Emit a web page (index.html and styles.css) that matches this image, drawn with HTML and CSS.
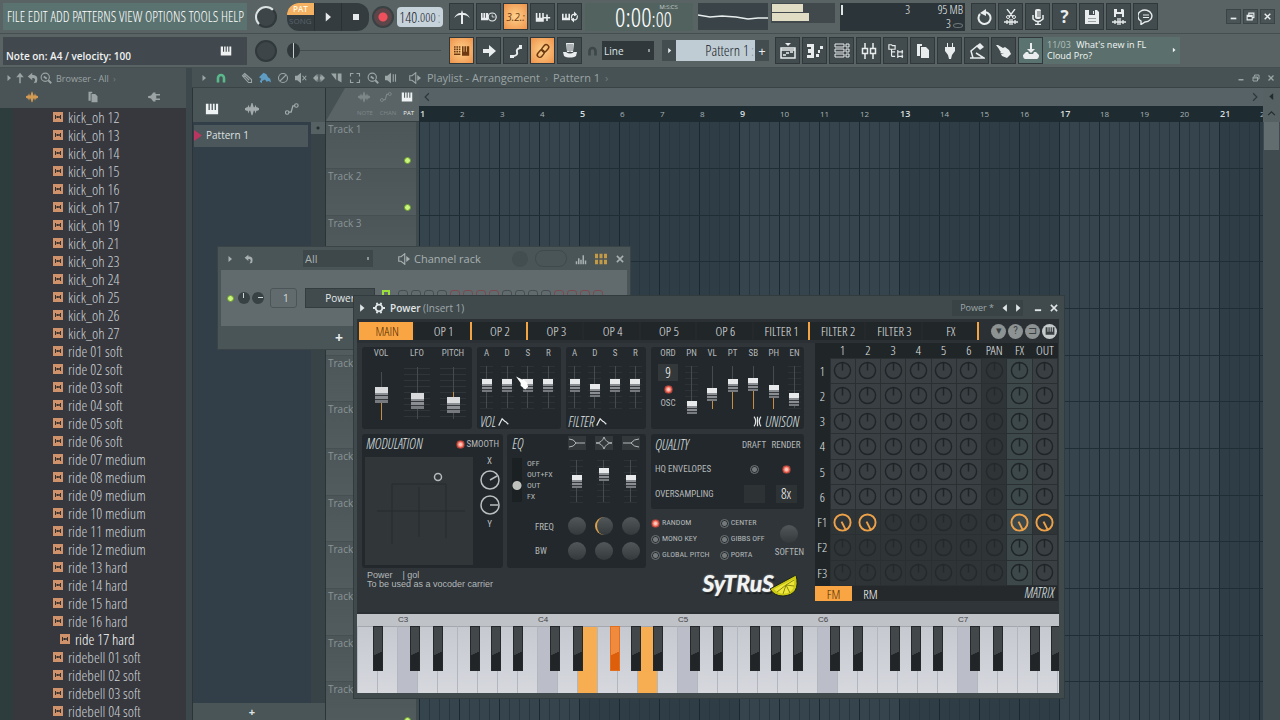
FILE: index.html
```html
<!DOCTYPE html>
<html lang="en">
<head>
    <meta charset="UTF-8">
    <meta name="viewport" content="width=device-width, initial-scale=1.0">
    <title>Power (Insert 1) - Studio</title>
    <link rel="stylesheet" href="styles.css">
</head>
<body>
    <!-- Icon set -->
    <svg class="sprite" aria-hidden="true">
        <symbol id="piano" viewBox="0 0 16 16"><path d="M1 2h3v7h1.500V2h2v7H9V2h2v7h1.500V2H15v12H1z" fill="currentColor"/></symbol>
        <symbol id="metronome" viewBox="0 0 16 16"><path d="M0 9q3-5 6-5l1 0 1-3 1 3 1 0q3 0 6 5-3-3-6-3l-1 0 0 9H7V6L6 6Q3 6 0 9z" fill="currentColor"/></symbol>
        <symbol id="pianoclock" viewBox="0 0 20 16"><path d="M0 3h2v6h1V3h2v6h1V3h3v9H0z" fill="currentColor"/><circle cx="14" cy="8" r="5" fill="none" stroke="currentColor" stroke-width="1.500"/><path d="M14 5v3h3" fill="none" stroke="currentColor"/></symbol>
        <symbol id="pianoplus" viewBox="0 0 20 16"><path d="M1 3h2v6h2V3h2v6h2V3h2v11H1z M14 5h2v3h3v2h-3v3h-2v-3h-3V8h3z" fill="currentColor"/></symbol>
        <symbol id="pianoloop" viewBox="0 0 20 16"><path d="M0 4h2v5h2V4h2v5h2V4h2v8H0z" fill="currentColor"/><path d="M12 10c-1-6 3-6 5-4M19 6c1 6-4 7-6 4" fill="none" stroke="currentColor" stroke-width="1.500"/><path d="M15 1l4 4-4 2zM15 15l-4-4 4-2z" fill="currentColor"/></symbol>
        <symbol id="keysgrid" viewBox="0 0 20 16"><path d="M0 2h2v2H0zM3 2h2v2H3zM6 2h2v2H6zM0 5h2v2H0zM3 5h2v2H3zM6 5h2v2H6zM0 8h2v2H0zM3 8h2v2H3zM6 8h2v2H6zM0 11h8v2H0zM10 2h2v7h1V2h2v7h1V2h3v12h-9z" fill="currentColor"/></symbol>
        <symbol id="arrow" viewBox="0 0 16 16"><path d="M2 6h6V2l7 6-7 6v-4H2z" fill="currentColor"/></symbol>
        <symbol id="slide" viewBox="0 0 16 16"><path d="M2 12h4v3H2zM11 2h3v4h-3z" fill="currentColor"/><path d="M6 13q4-1 3-4t3-4" fill="none" stroke="currentColor" stroke-width="2"/></symbol>
        <symbol id="link" viewBox="0 0 16 16"><g fill="none" stroke="currentColor" stroke-width="1.500" transform="rotate(-50 8 8)"><rect x="0.500" y="5.500" width="8" height="5" rx="2.500"/><rect x="7.500" y="5.500" width="8" height="5" rx="2.500"/></g></symbol>
        <symbol id="hat" viewBox="0 0 16 16"><path d="M4 0h8l-1 9H5zM1 9l3 0q4 3 8 0l3 0-1 4c-3 2-9 2-12 0z" fill="currentColor"/><path d="M6 1v7M8 1v8M10 1v7" stroke="#3b4448" stroke-width=".7"/></symbol>
        <symbol id="magnet" viewBox="0 0 16 16"><path d="M4 14V8a4 4 0 0 1 8 0v6" fill="none" stroke="currentColor" stroke-width="3.500"/></symbol>
        <symbol id="playlist" viewBox="0 0 16 16"><path d="M1 5h14v10H1zM1 7h14M3 12h3M6 10h3M10 9h3" fill="none" stroke="currentColor" stroke-width="1.500"/><path d="M5 0h6L8 3z" fill="currentColor"/></symbol>
        <symbol id="roll" viewBox="0 0 16 16"><path d="M0 1h7v14H0v-3h4v-2H1V6h3V4H0zM9 11h3v3H9zM11 7h2v3h-2zM13 3h3v3h-3z" fill="currentColor"/></symbol>
        <symbol id="rack" viewBox="0 0 16 16"><path d="M1 1h9v3H1zM1 6h9v3H1zM1 11h9v3H1z" fill="none" stroke="currentColor"/><path d="M12 1h3v3h-3zM12 6h3v3h-3zM12 11h3v3h-3z" fill="none" stroke="currentColor"/></symbol>
        <symbol id="mixer" viewBox="0 0 16 16"><path d="M1.500 5.500h5v5h-5zM9.500 5.500h5v5h-5zM4 0v5M4 11v5M12 0v5M12 11v5" fill="none" stroke="currentColor" stroke-width="1.500"/></symbol>
        <symbol id="tree" viewBox="0 0 18 16"><path d="M1 1h3l1 1h3v4H1zM4 6v8M4 9h4M4 14h4M11 7v5M11 12v4M11 9h6M11 14h6M16 7v4M16 12v4" fill="none" stroke="currentColor" stroke-width="1.300"/></symbol>
        <symbol id="files" viewBox="0 0 16 16"><path d="M2 1h5v2H5v10H2zM6 4h5l3 3v8H6z" fill="currentColor"/></symbol>
        <symbol id="plug" viewBox="0 0 16 16"><path d="M5 0h1v4h4V0h1v4h2v4l-3 4-1 4H7l-1-4-3-4V4h2z" fill="currentColor"/></symbol>
        <symbol id="lamp" viewBox="0 0 16 16"><path d="M1 15h14L7 10M4 15L2 8l6-5" fill="none" stroke="currentColor" stroke-width="1.500"/><path d="M7 3l4-3 4 4-4 3z" fill="currentColor"/></symbol>
        <symbol id="hand" viewBox="0 0 16 16"><path d="M0 2l2 0 5 3 2-1 4 3 2 4-4 4-5-2-1-2 3 0-4-1 1-1-1-1-1-2z" fill="currentColor"/></symbol>
        <symbol id="download" viewBox="0 0 16 16"><path d="M7 0h2v6h3l-4 4-4-4h3zM3 9h2l1 2h4l1-2h2l3 3c0 4-2 4-3 4H3c-1 0-3 0-3-4z" fill="currentColor"/></symbol>
        <symbol id="undo" viewBox="0 0 16 16"><path d="M9 3a6 6 0 1 1-5 2" fill="none" stroke="currentColor" stroke-width="2"/><path d="M4 4l6-4v7z" fill="currentColor"/></symbol>
        <symbol id="cut" viewBox="0 0 16 16"><path d="M4 0l6 8M12 0L6 8M1 13h14M4 11v4M7 10v6M9 10v6M12 11v4" fill="none" stroke="currentColor" stroke-width="1.300"/><circle cx="5" cy="8" r="1.500" fill="none" stroke="currentColor"/><circle cx="11" cy="8" r="1.500" fill="none" stroke="currentColor"/></symbol>
        <symbol id="mic" viewBox="0 0 16 16"><rect x="5" y="0" width="6" height="10" rx="2" fill="currentColor"/><path d="M3 6v4q5 5 10 0V6M8 12v3M5 15.500h6" fill="none" stroke="currentColor" stroke-width="1.500"/><path d="M7 3h4M7 5h4M7 7h4" stroke="#3b4448" stroke-width=".8"/></symbol>
        <symbol id="save" viewBox="0 0 16 16"><path d="M1 1h12l2 2v12H1z" fill="currentColor"/><path d="M5 1h6v5H5z" fill="#465054"/><path d="M4 9h8v1H4zM4 12h8v1H4z" fill="#9aa2a4"/><path d="M9 2h1v3H9z" fill="currentColor"/></symbol>
        <symbol id="savewave" viewBox="0 0 16 16"><path d="M3 0h9l1 1v7H3z" fill="currentColor"/><path d="M6 0h4v3H6zM5 5h6v3H5z" fill="#465054"/><path d="M1 13h14M4 11v4M7 9v7M9 9v7M12 11v4" stroke="currentColor" stroke-width="1.300"/></symbol>
        <symbol id="chat" viewBox="0 0 16 16"><path d="M3 12a7 6 0 1 1 4 1l-4 2.500z" fill="none" stroke="currentColor" stroke-width="1.400"/><path d="M5 6h6M5 8.500h6" stroke="currentColor"/></symbol>
        <symbol id="wave" viewBox="0 0 16 16"><path d="M0 7l2-1 1 0 1-3 1 3 1 0 1.500-5h1L10 6h1l1-3 1 3h1l2 1v2l-2 1-1 0-1 3-1-3-1 0-1.500 5h-1L6 10H5l-1 3-1-3H2L0 9z" fill="currentColor"/></symbol>
        <symbol id="auto" viewBox="0 0 16 16"><path d="M4 11.500h3l2-7h2" fill="none" stroke="currentColor" stroke-width="1.500"/><circle cx="2.500" cy="12" r="2" fill="none" stroke="currentColor" stroke-width="1.300"/><circle cx="13" cy="4" r="2" fill="none" stroke="currentColor" stroke-width="1.300"/></symbol>
        <symbol id="tri" viewBox="0 0 16 16"><path d="M5 2l7 6-7 6z" fill="currentColor"/></symbol>
        <symbol id="chevron" viewBox="0 0 16 16"><path d="M5 2l6 6-6 6" fill="none" stroke="currentColor" stroke-width="2"/></symbol>
        <symbol id="up" viewBox="0 0 16 16"><path d="M8 1l5 6H9v8H7V7H3z" fill="currentColor"/></symbol>
        <symbol id="back" viewBox="0 0 16 16"><path d="M1 6l6-5v3c6 0 8 3 6 10l-4 1c3-5 2-7-2-7v3z" fill="currentColor"/></symbol>
        <symbol id="find" viewBox="0 0 16 16"><circle cx="7" cy="7" r="5.500" fill="none" stroke="currentColor" stroke-width="1.500"/><path d="M11 11l4 4M5 6l4 3" stroke="currentColor" stroke-width="2.500"/></symbol>
        <symbol id="speaker" viewBox="0 0 16 16"><path d="M1 5h3l5-4v14l-5-4H1z" fill="none" stroke="currentColor" stroke-width="1.500"/><path d="M11 4l5 4-5 4z" fill="currentColor"/></symbol>
        <symbol id="mute" viewBox="0 0 16 16"><path d="M0 5h3l5-4v14l-5-4H0z" fill="currentColor"/><path d="M10 5l5 6M15 5l-5 6" stroke="currentColor" stroke-width="1.500"/></symbol>
        <symbol id="preview" viewBox="0 0 16 16"><path d="M0 5h3l5-4v14l-5-4H0z" fill="currentColor"/><path d="M11 3v10M14 3v10" stroke="currentColor" stroke-width="1.500"/></symbol>
        <symbol id="pencil" viewBox="0 0 16 16"><path d="M2 5l3-3 9 8 0 4-4 0zM5 5l6 6M3 7l3-3" fill="none" stroke="currentColor" stroke-width="1.500"/></symbol>
        <symbol id="brush" viewBox="0 0 16 16"><path d="M0 7l6-6 4 2 2 4 3 2 1 5-3-2-3 1-2-3-4 2 0 3-3-2 2-4z" fill="currentColor"/></symbol>
        <symbol id="ban" viewBox="0 0 16 16"><circle cx="8" cy="8" r="6" fill="none" stroke="currentColor" stroke-width="1.500"/><path d="M4 12l8-8" stroke="currentColor" stroke-width="1.500"/></symbol>
        <symbol id="stretch" viewBox="0 0 16 16"><path d="M0 8l5-5v3h1V3h1v10H6v-3H5v3zM16 8l-5-5v3h-1V3H9v10h1v-3h1v3z" fill="currentColor"/></symbol>
        <symbol id="slice" viewBox="0 0 16 16"><path d="M0 2h7v9zM9 2h5v12l-5-3z" fill="currentColor"/></symbol>
        <symbol id="select" viewBox="0 0 16 16"><path d="M6 2H2v4M10 2h4v4M14 10v4h-4M6 14H2v-4" fill="none" stroke="currentColor" stroke-width="1.500"/></symbol>
        <symbol id="plugside" viewBox="0 0 16 16"><path d="M0 7l4-1 3-4h3v2h6v2h-5v4h5v2h-6v2H7L4 10 0 9z" fill="currentColor"/></symbol>
        <symbol id="min" viewBox="0 0 16 16"><path d="M3 10h10v3H3z" fill="currentColor"/></symbol>
        <symbol id="restore" viewBox="0 0 16 16"><path d="M2 6h9v8H2zM5 5V2h9v8h-3M2 8h9" fill="none" stroke="currentColor" stroke-width="2"/></symbol>
        <symbol id="close" viewBox="0 0 16 16"><path d="M3 3l10 10M13 3L3 13" stroke="currentColor" stroke-width="2.500"/></symbol>
        <symbol id="gear" viewBox="0 0 16 16"><circle cx="8" cy="8" r="4.500" fill="none" stroke="currentColor" stroke-width="2.500"/><path d="M5 1l1 3M11 1l-1 3M5 15l1-3M11 15l-1-3M0 8h3M13 8h3" stroke="currentColor" stroke-width="2.500"/></symbol>
        <symbol id="sample" viewBox="0 0 10 10"><path d="M0 0h10v10H0z" fill="#d0926b"/><path d="M2.500 3v4M7.500 3v4M2 5h6M4.500 4v2M6 4v2" stroke="#33302f"/></symbol>
        <symbol id="bars" viewBox="0 0 16 16"><path d="M1 11h2v4H1zM4 7h2v8H4zM7 9h2v6H7zM10 3h2v12h-2zM13 10h2v5h-2z" fill="currentColor"/></symbol>
        <symbol id="steps" viewBox="0 0 16 16"><path d="M0 1h4v6H0zM6 1h4v6H6zM12 1h4v6h-4zM0 9h4v6H0zM6 9h4v6H6zM12 9h4v6h-4z" fill="currentColor"/></symbol>
        <symbol id="ring" viewBox="0 0 20 20"><circle cx="10" cy="10" r="8.500" fill="none" stroke="currentColor" stroke-width="1.500"/><path d="M10 2v8" stroke="currentColor" stroke-width="1.500"/></symbol>
        <symbol id="ring-on" viewBox="0 0 20 20"><circle cx="10" cy="10" r="8.500" fill="none" stroke="currentColor" stroke-width="2"/><path d="M9 9l4 8" stroke="currentColor" stroke-width="2"/></symbol>
        <symbol id="env" viewBox="0 0 16 16"><path d="M1 14L6 4l4 4h1l4 4" fill="none" stroke="currentColor" stroke-width="1.800"/></symbol>
        <symbol id="detune" viewBox="0 0 16 16"><path d="M3 1q5 7 0 14M8 1v14M13 1q-5 7 0 14" fill="none" stroke="currentColor" stroke-width="1.800"/></symbol>
        <symbol id="lowshelf" viewBox="0 0 16 12"><path d="M0 2q5 0 7 4 2 0 9 0M0 10q5 0 7-4" fill="none" stroke="currentColor"/></symbol>
        <symbol id="bell" viewBox="0 0 16 12"><path d="M0 6q6 0 8-6 2 6 8 6-6 0-8 6-2-6-8-6" fill="none" stroke="currentColor"/></symbol>
        <symbol id="highshelf" viewBox="0 0 16 12"><path d="M0 6h8q3-4 8-4M8 6q3 4 8 4" fill="none" stroke="currentColor"/></symbol>
    </svg>

    <div class="studio">
        <header class="toolbar">
            <div class="bar">
                <nav class="menu">
                    <a href="#">FILE</a><a href="#">EDIT</a><a href="#">ADD</a><a href="#">PATTERNS</a><a href="#">VIEW</a><a href="#">OPTIONS</a><a href="#">TOOLS</a><a href="#">HELP</a>
                </nav>
                <div class="dial-box"><span class="dial lit"></span></div>
                <div class="transport">
                    <button class="mode"><b>PAT</b><i>SONG</i></button>
                    <button aria-label="Play"><svg><use href="#tri"/></svg></button>
                    <button aria-label="Stop"><span class="stop"></span></button>
                </div>
                <button class="record" aria-label="Record"></button>
                <div class="tempo">140<small>.000</small><em>:</em></div>
                <div class="tools">
                    <button aria-label="Metronome"><svg><use href="#metronome"/></svg></button>
                    <button aria-label="Wait"><svg><use href="#pianoclock"/></svg></button>
                    <button class="on count">3.2.:</button>
                    <button aria-label="Overdub"><svg><use href="#pianoplus"/></svg></button>
                    <button aria-label="Loop record"><svg><use href="#pianoloop"/></svg></button>
                </div>
                <div class="clock"><span>0:00</span><div><em>M:S:CS</em><small>:00</small></div></div>
                <svg class="scope" viewBox="0 0 70 27"><path d="M0 12l12 2 12-1 14 1 12 2 10-1 10 0" fill="none" stroke="#e8eeee" stroke-width="1.500"/></svg>
                <div class="meters"><i></i><i></i></div>
                <div class="cpu">
                    <div><span>3</span><span>95 MB</span></div>
                    <div><span></span><span>3 <i></i></span></div>
                </div>
                <div class="tools">
                    <button aria-label="Undo"><svg><use href="#undo"/></svg></button>
                    <button aria-label="Cut"><svg><use href="#cut"/></svg></button>
                    <button aria-label="Record audio"><svg><use href="#mic"/></svg></button>
                    <button class="help">?</button>
                    <button aria-label="Save"><svg><use href="#save"/></svg></button>
                    <button aria-label="Export"><svg><use href="#savewave"/></svg></button>
                    <button aria-label="Chat"><svg><use href="#chat"/></svg></button>
                </div>
                <div class="window-buttons">
                    <button aria-label="Minimize"><svg><use href="#min"/></svg></button>
                    <button aria-label="Restore"><svg><use href="#restore"/></svg></button>
                    <button aria-label="Close"><svg><use href="#close"/></svg></button>
                </div>
            </div>
            <div class="bar">
                <div class="hint"><span>Note on: A4 / velocity: 100</span><svg><use href="#piano"/></svg></div>
                <div class="dial-box"><span class="dial"></span></div>
                <input class="position" type="range" value="0" aria-label="Song position">
                <div class="tools">
                    <button class="on" aria-label="Typing keyboard"><svg><use href="#keysgrid"/></svg></button>
                    <button aria-label="Step edit"><svg><use href="#arrow"/></svg></button>
                    <button aria-label="Slide"><svg><use href="#slide"/></svg></button>
                    <button class="on" aria-label="Link"><svg><use href="#link"/></svg></button>
                    <button aria-label="Multilink"><svg><use href="#hat"/></svg></button>
                </div>
                <svg class="snap-icon"><use href="#magnet"/></svg>
                <select class="snap" aria-label="Snap"><option>Line</option></select>
                <div class="pattern">
                    <button aria-label="Pattern menu"><svg><use href="#tri"/></svg></button>
                    <span>Pattern 1<em>:</em></span>
                    <button>+</button>
                </div>
                <div class="tools">
                    <button aria-label="Playlist"><svg><use href="#playlist"/></svg></button>
                    <button aria-label="Piano roll"><svg><use href="#roll"/></svg></button>
                    <button aria-label="Channel rack"><svg><use href="#rack"/></svg></button>
                    <button aria-label="Mixer"><svg><use href="#mixer"/></svg></button>
                    <button aria-label="Browser"><svg><use href="#tree"/></svg></button>
                    <button aria-label="Project"><svg><use href="#files"/></svg></button>
                    <button aria-label="Plugins"><svg><use href="#plug"/></svg></button>
                    <button aria-label="Tempo tapper"><svg><use href="#lamp"/></svg></button>
                    <button aria-label="Touch"><svg><use href="#hand"/></svg></button>
                    <button class="green" aria-label="Download"><svg><use href="#download"/></svg></button>
                </div>
                <a class="news" href="#"><span><i>11/03</i> What's new in FL<br>Cloud Pro?</span><svg><use href="#tri"/></svg></a>
            </div>
        </header>

        <main>
            <aside class="browser">
                <div class="browser-head">
                    <svg><use href="#tri"/></svg><svg><use href="#up"/></svg><svg><use href="#back"/></svg><svg><use href="#find"/></svg>
                    <span>Browser - All <i>›</i></span>
                </div>
                <div class="browser-tabs">
                    <button class="on" aria-label="Sounds"><svg><use href="#wave"/></svg></button>
                    <button aria-label="Files"><svg><use href="#files"/></svg></button>
                    <button aria-label="Plugins"><svg><use href="#plugside"/></svg></button>
                </div>
                <ul id="sounds"></ul>
            </aside>

            <section class="playlist">
                <div class="playlist-head">
                    <svg class="small"><use href="#tri"/></svg>
                    <svg class="magnet"><use href="#magnet"/></svg>
                    <svg><use href="#pencil"/></svg>
                    <svg class="blue"><use href="#brush"/></svg>
                    <svg><use href="#ban"/></svg>
                    <svg><use href="#mute"/></svg>
                    <svg><use href="#stretch"/></svg>
                    <svg><use href="#slice"/></svg>
                    <svg><use href="#select"/></svg>
                    <svg><use href="#find"/></svg>
                    <svg><use href="#preview"/></svg>
                    <svg class="out"><use href="#speaker"/></svg>
                    <span>Playlist - Arrangement <i>›</i> Pattern 1 <i>›</i></span>
                    <div class="mini-buttons">
                        <svg><use href="#min"/></svg><svg><use href="#restore"/></svg><svg><use href="#close"/></svg>
                    </div>
                </div>
                <div class="playlist-body">
                    <div class="picker">
                        <div class="picker-tabs">
                            <svg class="on"><use href="#piano"/></svg><svg><use href="#wave"/></svg><svg><use href="#auto"/></svg>
                        </div>
                        <div class="picker-list">
                            <div class="pattern-item">Pattern 1</div>
                            <div class="picker-scroll"><i></i></div>
                        </div>
                        <button class="picker-add">+</button>
                    </div>
                    <div class="tracks">
                        <div class="track-modes">
                            <div><svg><use href="#wave"/></svg><svg><use href="#auto"/></svg><svg class="on"><use href="#piano"/></svg></div>
                            <div><span>NOTE</span><span>CHAN</span><span class="on">PAT</span></div>
                        </div>
                        <div id="tracks"></div>
                    </div>
                    <div class="timeline">
                        <div class="hscroll"><svg class="flip"><use href="#chevron"/></svg><svg><use href="#chevron"/></svg></div>
                        <div class="ruler" id="ruler"></div>
                        <div class="lanes" id="lanes"></div>
                    </div>
                    <div class="vscroll"><b><svg class="flip"><use href="#tri"/></svg></b><b><svg class="turn"><use href="#chevron"/></svg></b><i></i></div>
                </div>
            </section>
        </main>

        <section class="rack">
            <div class="rack-head">
                <svg class="small"><use href="#tri"/></svg>
                <svg class="undo"><use href="#back"/></svg>
                <select aria-label="Channel filter"><option>All</option></select>
                <svg class="out"><use href="#speaker"/></svg>
                <span>Channel rack</span>
                <i class="swing"></i><i class="pill"></i>
                <svg><use href="#bars"/></svg>
                <svg class="steps-icon"><use href="#steps"/></svg>
                <svg><use href="#close"/></svg>
            </div>
            <div class="rack-body">
                <i class="led"></i><i class="pot"></i><i class="pot side"></i>
                <span class="route">1</span>
                <button class="channel">Power</button>
                <i class="select-led"></i>
                <div class="step-row" id="steps-row"></div>
            </div>
            <div class="rack-foot"><button>+</button></div>
        </section>

        <section class="sytrus">
            <div class="sytrus-title">
                <svg class="small"><use href="#tri"/></svg>
                <svg class="gear"><use href="#gear"/></svg>
                <h1>Power <span>(Insert 1)</span></h1>
                <div class="preset">Power * <button aria-label="Previous preset"><svg class="flip"><use href="#tri"/></svg></button><button aria-label="Next preset"><svg><use href="#tri"/></svg></button></div>
                <svg><use href="#min"/></svg><svg><use href="#close"/></svg>
            </div>
            <div class="tab-row">
                <nav class="tabs">
                    <button class="on">MAIN</button><button class="used">OP 1</button><button class="used">OP 2</button><button>OP 3</button><button>OP 4</button><button>OP 5</button><button>OP 6</button><button class="used">FILTER 1</button><button>FILTER 2</button><button>FILTER 3</button><button class="used">FX</button>
                </nav>
                <div class="round-buttons">
                    <button>▾</button><button>?</button><button>⊐</button><button class="on" aria-label="Keyboard"><svg><use href="#piano"/></svg></button>
                </div>
            </div>
            <div class="synth">
                <div class="left">
                    <div class="row">
                        <div class="panel vol">
                            <div class="faders big">
                                <label class="fader up">VOL<input type="range" value="46"></label>
                                <label class="fader">LFO<input type="range" value="33"></label>
                                <label class="fader down">PITCH<input type="range" value="25"></label>
                            </div>
                        </div>
                        <div class="panel adsr">
                            <div class="faders">
                                <label class="fader">A<input type="range" value="53"></label>
                                <label class="fader">D<input type="range" value="53"></label>
                                <label class="fader">S<input type="range" value="53"></label>
                                <label class="fader">R<input type="range" value="53"></label>
                            </div>
                            <h2>VOL <svg><use href="#env"/></svg></h2>
                            <svg class="cursor" viewBox="0 0 14 14"><path d="M0 0l6 3 2 0 4 4 1 4-3 3-5-4 0-3z" fill="#fff"/></svg>
                        </div>
                        <div class="panel adsr">
                            <div class="faders">
                                <label class="fader">A<input type="range" value="53"></label>
                                <label class="fader">D<input type="range" value="42"></label>
                                <label class="fader">S<input type="range" value="53"></label>
                                <label class="fader">R<input type="range" value="53"></label>
                            </div>
                            <h2>FILTER <svg><use href="#env"/></svg></h2>
                        </div>
                    </div>
                    <div class="row">
                        <div class="panel modulation">
                            <div class="panel-head">
                                <h2>MODULATION</h2>
                                <label class="check"><input type="checkbox" checked>SMOOTH</label>
                            </div>
                            <div class="mod-body">
                                <div class="pad">
                                    <svg viewBox="0 0 108 108"><path d="M27 87V27h54v54M12 54h88M54 30v50" fill="none" stroke="#262b2d"/><circle cx="73" cy="20" r="3.500" fill="none" stroke="#b6babb" stroke-width="1.500"/></svg>
                                </div>
                                <div class="xy">
                                    <span>X</span>
                                    <svg viewBox="0 0 20 20"><circle cx="10" cy="10" r="9" fill="none" stroke="currentColor" stroke-width="1.500"/><path d="M10 10l7-4" stroke="currentColor" stroke-width="1.500"/></svg>
                                    <svg viewBox="0 0 20 20"><circle cx="10" cy="10" r="9" fill="none" stroke="currentColor" stroke-width="1.500"/><path d="M10 10h8" stroke="currentColor" stroke-width="1.500"/></svg>
                                    <span>Y</span>
                                </div>
                            </div>
                        </div>
                        <div class="panel eq">
                            <div class="eq-left">
                                <h2>EQ</h2>
                                <div class="eq-switch">
                                    <label><input type="radio" name="eq">OFF</label>
                                    <label><input type="radio" name="eq">OUT+FX</label>
                                    <label><input type="radio" name="eq" checked>OUT</label>
                                    <label><input type="radio" name="eq">FX</label>
                                </div>
                                <div class="eq-names"><span>FREQ</span><span>BW</span></div>
                            </div>
                            <div class="eq-band">
                                <button aria-label="Low shelf"><svg><use href="#lowshelf"/></svg></button>
                                <input type="range" value="50" aria-label="Low level">
                                <i class="ball"></i><i class="ball"></i>
                            </div>
                            <div class="eq-band">
                                <button aria-label="Peak"><svg><use href="#bell"/></svg></button>
                                <input type="range" value="65" aria-label="Mid level">
                                <i class="ball arc"></i><i class="ball"></i>
                            </div>
                            <div class="eq-band">
                                <button aria-label="High shelf"><svg><use href="#highshelf"/></svg></button>
                                <input type="range" value="50" aria-label="High level">
                                <i class="ball"></i><i class="ball"></i>
                            </div>
                        </div>
                    </div>
                    <p class="notes">Power &nbsp; &nbsp;| gol<br>To be used as a vocoder carrier</p>
                </div>

                <div class="right">
                    <div class="panel unison">
                        <div class="order"><span>ORD</span><b>9</b><label class="check"><input type="checkbox" checked>OSC</label></div>
                        <div class="uni">
                            <div class="faders">
                                <label class="fader">PN<input type="range" value="2"></label>
                                <label class="fader up">VL<input type="range" value="33"></label>
                                <label class="fader up">PT<input type="range" value="53"></label>
                                <label class="fader up">SB<input type="range" value="55"></label>
                                <label class="fader up">PH<input type="range" value="39"></label>
                                <label class="fader">EN<input type="range" value="21"></label>
                            </div>
                            <h2><svg><use href="#detune"/></svg> UNISON</h2>
                        </div>
                    </div>
                    <div class="panel quality">
                        <h2>QUALITY</h2><span>DRAFT</span><span>RENDER</span>
                        <span>HQ ENVELOPES</span><input type="checkbox" aria-label="HQ draft"><input type="checkbox" aria-label="HQ render" checked>
                        <span>OVERSAMPLING</span><b></b><b>8x</b>
                    </div>
                    <div class="options">
                        <div>
                            <label class="check"><input type="checkbox" checked>RANDOM</label>
                            <label class="check"><input type="checkbox">MONO KEY</label>
                            <label class="check"><input type="checkbox">GLOBAL PITCH</label>
                        </div>
                        <div>
                            <label class="check"><input type="checkbox">CENTER</label>
                            <label class="check"><input type="checkbox">GIBBS OFF</label>
                            <label class="check"><input type="checkbox">PORTA</label>
                        </div>
                        <div class="soften"><i class="ball"></i>SOFTEN</div>
                    </div>
                    <div class="logo">
                        <strong>SyTRuS</strong>
                        <svg viewBox="0 0 28 22"><path d="M26 0q5 20-13 21Q4 21 0 14z" fill="#c9c813" stroke="#20251c"/><path d="M24 4q2 14-11 15Q7 18 4 14z" fill="#eee63a"/><path d="M16 10l8 1M16 10l4 8M16 10l-3 9M16 10l-9 7M16 10l8-5" stroke="#8a8a10"/></svg>
                    </div>
                </div>

                <div class="matrix">
                    <table>
                        <thead><tr><th></th><th>1</th><th>2</th><th>3</th><th>4</th><th>5</th><th>6</th><th>PAN</th><th>FX</th><th>OUT</th></tr></thead>
                        <tbody id="matrix"></tbody>
                    </table>
                    <div class="matrix-foot"><button class="on">FM</button><button>RM</button><h2>MATRIX</h2></div>
                </div>
            </div>
            <div class="keyboard" id="keyboard"></div>
        </section>
    </div>

    <script src="script.js"></script>
</body>
</html>
```
FILE: styles.css
```css
* {
    box-sizing: border-box;
}

:root {
    --narrow: "Open Sans Condensed Light", "Open Sans Condensed", "Roboto Condensed", "Liberation Sans Narrow", sans-serif;
}

body {
    margin: 0;
    font-family: "Open Sans", "Noto Sans", sans-serif;
    font-size: 11px;
    color: #c5cbcb;
    background: #2f3d47;
}

button {
    padding: 0;
    border: none;
    background: none;
    color: inherit;
    font: inherit;
    cursor: pointer;
}

a {
    color: inherit;
    text-decoration: none;
}

svg {
    width: 12px;
    height: 12px;
    flex: none;
}

i, em {
    font-style: normal;
}

h1, h2, p, ul {
    margin: 0;
    padding: 0;
    font-weight: normal;
}

.sprite {
    display: none;
}

.flip {
    transform: rotate(180deg);
}

.turn {
    transform: rotate(-90deg);
}

.studio {
    position: relative;
    display: flex;
    flex-direction: column;
    height: 100vh;
    overflow: hidden;
}

/* Condensed face for menus, lists and readouts */
.menu, .tempo, .clock, .cpu, .pattern span, #sounds, h2, .tabs, .matrix th, .matrix-foot, .order b, .quality b {
    font-family: var(--narrow);
    font-weight: 300;
}

/* Toolbar */
.toolbar {
    background: #596364;
}

.bar {
    display: flex;
    align-items: center;
    height: 34px;
    border-bottom: 1px solid #454e50;
}

.menu {
    display: flex;
    justify-content: space-between;
    align-items: center;
    width: 244px;
    height: 27px;
    margin-left: 3px;
    padding: 0 3px 0 4px;
    background: #5b7370;
    color: #fff;
    font-size: 14px;
}

.hint {
    display: flex;
    align-items: center;
    justify-content: space-between;
    width: 244px;
    height: 28px;
    margin-left: 3px;
    padding: 12px 15px 2px 3px;
    background: #42494e;
    color: #f0f2f2;
    font-size: 10px;
    font-weight: 600;
}

.hint svg {
    margin-top: -10px;
}

.dial-box {
    display: flex;
    align-items: center;
    justify-content: center;
    width: 37px;
}

.dial {
    width: 22px;
    height: 22px;
    border: 2px solid #30383b;
    border-radius: 50%;
    background: #3d4548;
}

.dial.lit {
    border-color: #dce2e2 #30383b #30383b #dce2e2;
}

.transport {
    display: flex;
    width: 82px;
    height: 28px;
    margin-left: 3px;
    border-radius: 12px;
    overflow: hidden;
    background: #343c40;
    color: #e6eaea;
}

.transport button {
    flex: 1;
    display: flex;
    align-items: center;
    justify-content: center;
}

.transport button + button {
    border-left: 1px solid #2a3135;
}

.transport .mode {
    flex-direction: column;
    justify-content: flex-start;
    font-size: 8px;
    line-height: 12px;
}

.mode b {
    width: 100%;
    background: #f5b162;
    color: #fff6e0;
    font-weight: 600;
}

.mode i {
    color: #59636a;
}

.stop {
    width: 6px;
    height: 6px;
    background: #e6eaea;
}

.record {
    width: 22px;
    height: 22px;
    margin: 0 3px;
    border: 2px solid #394144;
    border-radius: 50%;
    background: radial-gradient(circle, #f0505c 4px, #5c4649 5px);
}

.tempo {
    display: flex;
    align-items: center;
    justify-content: center;
    width: 46px;
    height: 20px;
    border-radius: 4px;
    background: #c7d3da;
    color: #17222a;
    font-size: 15px;
}

.tempo small {
    font-size: 13px;
}

.tempo em, .pattern em {
    margin-left: 2px;
    color: #8a98a0;
}

.tools {
    display: flex;
    gap: 2px;
    margin-left: 6px;
}

.tools button {
    display: flex;
    align-items: center;
    justify-content: center;
    width: 25px;
    height: 27px;
    border: 1px solid #30383b;
    background: #424b4e;
    color: #e9eded;
}

.tools svg {
    width: 16px;
    height: 16px;
}

.tools .on {
    background: radial-gradient(#fdd28c, #f0924a);
    color: #6d3a12;
}

.tools .count {
    font-size: 10px;
    font-style: italic;
}

.tools .help {
    font-size: 17px;
    font-weight: bold;
}

.tools .green {
    background: #5b7370;
}

.clock {
    display: flex;
    width: 108px;
    height: 28px;
    margin-left: 3px;
    padding-left: 30px;
    background: #52635f;
    color: #fff;
    font-size: 26px;
    line-height: 28px;
}

.clock div {
    display: flex;
    flex-direction: column;
    padding-top: 1px;
}

.clock small {
    font-size: 20px;
    line-height: 20px;
}

.clock em {
    padding-left: 8px;
    font-family: "Open Sans", sans-serif;
    font-size: 6px;
    line-height: 6px;
}

.scope {
    width: 70px;
    height: 27px;
    margin-left: 5px;
    background: #3a4348;
}

.meters {
    width: 64px;
    height: 20px;
    margin: -8px 0 0 3px;
    padding: 1px;
    background: #42494c;
}

.meters i {
    display: block;
    width: 31px;
    height: 8px;
    margin-bottom: 1px;
    background: #e0ddc4;
}

.meters i + i {
    width: 37px;
}

.cpu {
    width: 125px;
    height: 28px;
    margin-left: 5px;
    background: #2b3438 linear-gradient(#dfe5e5, #dfe5e5) left 1px top 2px / 2px 10px no-repeat;
    color: #f0f4f4;
    font-size: 12px;
    line-height: 14px;
}

.cpu div {
    display: flex;
}

.cpu span {
    flex: 1;
    padding-right: 2px;
    text-align: right;
}

.cpu span:first-child {
    flex: 0 0 72px;
}

.cpu i {
    display: inline-block;
    width: 10px;
    height: 5px;
    border: 1px solid #6f797b;
    border-radius: 50%;
}

.window-buttons {
    display: flex;
    gap: 2px;
    margin-left: auto;
    margin-right: 5px;
}

.window-buttons button {
    display: flex;
    align-items: center;
    justify-content: center;
    width: 15px;
    height: 15px;
    border: 1px solid #3a4346;
    background: #4a5457;
    color: #e9eded;
}

.window-buttons svg {
    width: 9px;
    height: 9px;
}

.position {
    width: 154px;
    height: 16px;
    margin: 0 2px 0 3px;
    appearance: none;
    background: linear-gradient(#434c4e, #434c4e) center / 100% 1px no-repeat;
}

.position::-webkit-slider-thumb {
    appearance: none;
    width: 13px;
    height: 15px;
    border-radius: 50%;
    background: linear-gradient(90deg, #30383b 45%, #c9cfcf 50%, #30383b 55%);
}

.snap-icon {
    width: 13px;
    margin: 0 3px 0 4px;
    color: #3d4648;
}

select {
    appearance: none;
    border: none;
    border-radius: 0;
    color: inherit;
    font: inherit;
    background: #30383c linear-gradient(#8b9496, #8b9496) right 4px center / 2px 3px no-repeat;
}

.snap {
    width: 52px;
    height: 19px;
    padding: 0 2px;
    color: #dfe5e5;
    font-size: 10px;
}

.pattern {
    display: flex;
    height: 21px;
    margin-left: 8px;
    font-size: 13px;
}

.pattern button {
    display: flex;
    align-items: center;
    justify-content: center;
    width: 14px;
    background: #434c4f;
    color: #e9eded;
}

.pattern svg {
    width: 7px;
    height: 7px;
}

.pattern span {
    width: 79px;
    padding-right: 1px;
    background: #c0ccd3;
    color: #17222a;
    font-size: 15px;
    line-height: 20px;
    text-align: right;
}

.news {
    display: flex;
    align-items: center;
    justify-content: space-between;
    width: 137px;
    height: 27px;
    padding: 0 3px 2px 4px;
    background: #5b706c;
    color: #f2f6f5;
    font-size: 9px;
    line-height: 11px;
}

.news i {
    margin-right: 3px;
    color: #b3c0bd;
}

.news svg {
    width: 6px;
    height: 6px;
}

/* Browser */
main {
    flex: 1;
    display: flex;
    min-height: 0;
    background: #3c484c;
}

.browser {
    width: 186px;
    margin-right: 6px;
    background: linear-gradient(90deg, #2d3c3d 12px, #36383e 13px);
    overflow: hidden;
}

.browser-head {
    display: flex;
    align-items: center;
    gap: 1px;
    height: 20px;
    padding-left: 5px;
    background: #4a5456;
    color: #9ba3a4;
    font-size: 9px;
}

.browser-head span {
    padding-left: 3px;
}

.browser-head svg:first-child, .small {
    width: 8px;
    height: 8px;
}

.browser-tabs {
    display: flex;
    justify-content: space-between;
    height: 20px;
    padding: 0 26px;
    background: #4a5456;
    color: #9ba3a4;
}

.browser-tabs .on {
    color: #d39a54;
}

#sounds {
    list-style: none;
    color: #ced1d4;
    font-size: 15px;
    line-height: 18px;
}

#sounds li {
    display: flex;
    align-items: center;
    gap: 5px;
    height: 18px;
    padding-left: 53px;
    white-space: nowrap;
}

#sounds li.on {
    padding-left: 60px;
    color: #fff;
}

#sounds svg {
    width: 10px;
    height: 10px;
}

/* Playlist */
.playlist {
    flex: 1;
    display: flex;
    flex-direction: column;
    min-width: 0;
}

.playlist-head {
    display: flex;
    align-items: center;
    gap: 6px;
    height: 20px;
    padding: 0 5px 0 8px;
    border-bottom: 1px solid #394346;
    background: #475254;
    color: #9ba5a6;
}

.playlist-head i, .browser-head i {
    margin: 0 2px;
    color: #717c7e;
}

.magnet {
    margin: 0 8px 0 1px;
    color: #59b98c;
}

.blue {
    color: #5f9cc4;
}

.playlist-head .out {
    margin-left: 6px;
}

.mini-buttons {
    display: flex;
    gap: 7px;
    margin-left: auto;
}

.mini-buttons svg {
    width: 8px;
    height: 8px;
}

.playlist-body {
    flex: 1;
    display: flex;
    min-height: 0;
}

.picker {
    display: flex;
    flex-direction: column;
    width: 134px;
    border-left: 1px solid #2b3538;
    border-right: 1px solid #2b3538;
    background: #4a5557;
}

.picker-tabs {
    display: flex;
    align-items: center;
    gap: 26px;
    height: 34px;
    padding: 8px 0 0 12px;
    color: #a3abac;
}

.picker-tabs svg {
    width: 14px;
    height: 14px;
}

.on {
    color: #eef2f2;
}

.picker-list {
    flex: 1;
    display: flex;
    justify-content: space-between;
    background: #333f48;
}

.pattern-item {
    display: flex;
    width: 114px;
    height: 22px;
    margin: 3px 0 0 1px;
    background: #4b575a;
    color: #dce1e1;
    font-size: 10px;
    line-height: 20px;
}

.pattern-item::before {
    content: "";
    width: 8px;
    margin: 5px 4px 6px 0;
    background: #b8365f;
    clip-path: polygon(0 0, 100% 50%, 0 100%);
}

.picker-scroll {
    width: 14px;
    background: #374347;
}

.picker-scroll i {
    display: block;
    height: 12px;
    background: radial-gradient(circle, #242d30 1px, #566164 2px);
}

.picker-add {
    height: 17px;
    margin-right: 14px;
    color: #dfe5e5;
    font-weight: bold;
}

.tracks {
    width: 93px;
    background: #3f4a4d;
}

.track-modes {
    height: 34px;
    padding: 3px 5px 0 31px;
    border-bottom: 1px solid #333d40;
    background: linear-gradient(120deg, #465153 16px, #5a6466 17px);
    color: #7d8788;
    font-size: 6px;
}

.track-modes div {
    display: flex;
    justify-content: space-between;
    line-height: 12px;
    margin-bottom: 4px;
}

.track-modes svg {
    width: 14px;
}

.track {
    display: flex;
    justify-content: space-between;
    width: 90px;
    height: 47px;
    padding: 0 5px 0 2px;
    border-bottom: 1px solid #465053;
    background: linear-gradient(#4c5659, #525c5e);
    color: #8b9596;
    font-size: 10px;
}

.track:nth-child(3n), .lane:nth-child(3n) {
    height: 46px;
}

.led {
    width: 7px;
    height: 7px;
    border: 1px solid #6b9a2d;
    border-radius: 50%;
    background: #c9f57e;
}

.track .led {
    margin-top: 35px;
}

.timeline {
    flex: 1;
    min-width: 0;
    overflow: hidden;
}

.hscroll {
    display: flex;
    align-items: center;
    justify-content: space-between;
    height: 18px;
    padding: 0 3px;
    background: #566265;
    color: #2f393c;
}

.hscroll svg {
    width: 10px;
    height: 10px;
}

.ruler {
    display: flex;
    height: 16px;
    background: #1e2b31;
    color: #aab3b6;
    font-size: 8px;
    line-height: 16px;
}

.ruler span {
    flex: 0 0 40px;
    padding-left: 1px;
}

.ruler span:nth-child(4n + 1) {
    color: #d8dedf;
    font-size: 9px;
    font-weight: 600;
}

.lane {
    height: 47px;
    border-bottom: 1px solid #1f2d35;
    background:
        repeating-linear-gradient(90deg, #1b2931 0 1px, transparent 1px 40px),
        repeating-linear-gradient(90deg, #28363f 0 1px, transparent 1px 10px),
        repeating-linear-gradient(90deg, #35444d 0 160px, #2f3d46 160px 320px);
}

.vscroll {
    width: 17px;
    background: #3f4b4e;
    color: #222b2e;
}

.vscroll b {
    display: flex;
    align-items: center;
    justify-content: center;
    height: 17px;
    background: #566164;
}

.vscroll svg {
    width: 9px;
    height: 9px;
}

.vscroll i {
    display: block;
    height: 28px;
    margin: 0 1px;
    background: #626d6f;
}

/* Channel rack */
.rack {
    position: absolute;
    left: 217px;
    top: 246px;
    width: 414px;
    padding: 0 3px;
    border: 1px solid #3a4446;
    background: #4a5557;
}

.rack-head {
    display: flex;
    align-items: center;
    height: 23px;
    padding: 0 2px 0 5px;
    color: #a8b0b1;
}

.rack-head .undo {
    margin: 0 49px 0 10px;
    width: 10px;
}

.rack-head select {
    width: 70px;
    height: 17px;
    margin-right: 25px;
    padding: 0 2px;
    background-color: #3e484a;
}

.rack-head .out {
    margin-right: 4px;
}

.rack-head svg:nth-last-child(-n + 3) {
    margin-left: 8px;
}

.rack-head svg:last-child {
    width: 10px;
}

.rack-head .steps-icon {
    color: #c39a45;
}

.swing {
    width: 16px;
    height: 16px;
    margin-left: auto;
    border-radius: 50%;
    background: #434e50;
}

.pill {
    width: 32px;
    height: 17px;
    margin: 0 0 0 7px;
    border: 1px solid #3f4a4c;
    border-radius: 8px;
}

.rack-body {
    display: flex;
    align-items: center;
    height: 56px;
    padding-left: 6px;
    background: #616b6d;
}

.pot {
    width: 12px;
    height: 12px;
    margin-left: 4px;
    border-radius: 50%;
    background: linear-gradient(#cfd5d5, #cfd5d5) 5px 1px / 1px 5px no-repeat, #384144;
}

.pot.side {
    margin-left: 2px;
    background: linear-gradient(#cfd5d5, #cfd5d5) 6px 5px / 5px 1px no-repeat, #384144;
}

.route {
    width: 27px;
    height: 20px;
    margin: 0 8px 0 6px;
    padding-right: 7px;
    border: 1px solid #4b5557;
    border-radius: 3px;
    color: #cfd5d5;
    text-align: right;
    line-height: 18px;
}

.rack-body .channel {
    width: 70px;
    height: 20px;
    border: 1px solid #333c3f;
    background: #414b4e;
    color: #e5e9e9;
    font-size: 10px;
}

.select-led {
    width: 8px;
    height: 17px;
    margin: 0 8px 0 7px;
    border: 2px solid #9be03a;
}

.step-row {
    display: flex;
    gap: 3px;
}

.step-row i {
    width: 10px;
    height: 17px;
    border: 1px solid #454e50;
    border-radius: 3px;
}

.step-row .red {
    border-color: #7b4a50;
}

.rack-foot {
    height: 23px;
    padding-left: 114px;
}

.rack-foot button {
    height: 23px;
    color: #e9eded;
    font-size: 14px;
    font-weight: bold;
}

/* Sytrus window */
.sytrus {
    position: absolute;
    left: 353px;
    top: 295px;
    width: 712px;
    padding: 0 5px 5px 3px;
    border: 1px solid #323c3f;
    background: #404a4d;
    font-family: "Liberation Sans Narrow", "Roboto Condensed", sans-serif;
}

.sytrus-title {
    display: flex;
    align-items: center;
    height: 23px;
    color: #e0e5e5;
    font-family: "Open Sans", sans-serif;
    font-size: 10px;
}

.sytrus-title .gear {
    width: 12px;
    height: 12px;
    margin: 0 5px 0 6px;
}

.sytrus-title h1 {
    font-size: 10px;
    font-weight: 600;
}

.sytrus-title h1 span {
    color: #9fa8a9;
    font-weight: normal;
}

.sytrus-title > svg {
    width: 10px;
    height: 10px;
}

.sytrus-title > svg:last-child {
    margin-left: 6px;
}

.preset {
    display: flex;
    align-items: center;
    height: 16px;
    margin: 0 10px 0 auto;
    padding-left: 8px;
    background: #394346;
    color: #9fa8a9;
    font-size: 9px;
}

.preset button {
    display: flex;
    margin-left: 3px;
    color: #e0e5e5;
}

.preset svg {
    width: 10px;
    height: 10px;
}

.preset button:first-of-type {
    margin-left: 6px;
}

.tab-row {
    display: flex;
    justify-content: space-between;
    padding: 3px 2px;
    background: #2a3033;
}

.tabs {
    display: grid;
    grid-template-columns: repeat(11, 1fr);
    width: 620px;
    background: #212629;
}

.tabs button {
    height: 18px;
    padding-left: 2px;
    border-right: 2px solid #25292c;
    color: #e3e7e8;
    font-size: 13px;
    line-height: 17px;
}

.tabs .used {
    border-color: #f5a443;
}

.tabs .on, .matrix-foot .on {
    background: #f9a544;
    color: #4c2a02;
}

.round-buttons {
    display: flex;
    gap: 2px;
    align-items: center;
}

.round-buttons button {
    display: flex;
    align-items: center;
    justify-content: center;
    width: 15px;
    height: 15px;
    border-radius: 50%;
    background: #8d9293;
    color: #3a4042;
    font-size: 11px;
    line-height: 14px;
}

.round-buttons svg {
    width: 10px;
    height: 10px;
}

.round-buttons .on {
    background: #c6cacb;
}

.synth {
    display: flex;
    gap: 5px;
    height: 269px;
    padding: 0 1px 0 5px;
    background: #2f3539;
}

.left {
    width: 284px;
    padding-top: 4px;
}

.row {
    display: flex;
    justify-content: space-between;
    margin-bottom: 5px;
}

.panel {
    position: relative;
    border-radius: 3px;
    background: #23282c;
    color: #b4b9ba;
    font-size: 9px;
}

h2 {
    color: #dde1e2;
    font-size: 14px;
    font-style: italic;
    line-height: 14px;
    white-space: nowrap;
}

h2 svg {
    width: 11px;
    height: 11px;
}

.vol {
    width: 110px;
    height: 82px;
    padding: 0 6px;
}

.adsr {
    width: 84px;
    height: 82px;
    padding: 0 6px 0 3px;
}

.adsr + .adsr {
    width: 80px;
    padding: 0 4px 0 2px;
}

.faders {
    display: flex;
    justify-content: space-between;
}

.fader {
    display: flex;
    flex-direction: column;
    align-items: center;
    width: 13px;
    line-height: 12px;
}

.big .fader {
    width: 26px;
}

.fader input, .eq-band input {
    writing-mode: vertical-lr;
    direction: rtl;
    appearance: none;
    width: 13px;
    height: 56px;
    margin: 0;
    background:
        linear-gradient(#454b4e, #454b4e) center / 1px 42px no-repeat,
        repeating-linear-gradient(#2c3235 0 1px, transparent 1px 6px) center / 13px 43px no-repeat;
}

.big input {
    width: 26px;
    height: 67px;
    background:
        linear-gradient(#454b4e, #454b4e) center / 1px 52px no-repeat,
        repeating-linear-gradient(#2f3538 0 1px, transparent 1px 6px) center / 26px 50px no-repeat;
}

.up input {
    background:
        linear-gradient(#c78c46, #c78c46) center bottom 6px / 1px 18px no-repeat,
        linear-gradient(#454b4e, #454b4e) center / 1px 42px no-repeat;
}

.down input {
    background:
        linear-gradient(#c78c46, #c78c46) center top 33px / 1px 10px no-repeat,
        linear-gradient(#454b4e, #454b4e) center / 1px 52px no-repeat,
        repeating-linear-gradient(#2f3538 0 1px, transparent 1px 6px) center / 26px 50px no-repeat;
}

.fader input::-webkit-slider-thumb, .eq-band input::-webkit-slider-thumb {
    appearance: none;
    width: 10px;
    height: 13px;
    background: linear-gradient(#e8e9ea 5px, #8b8f93 5px 7px, #35393c 7px 8px, #8b8f93 8px 10px, #35393c 10px 11px, #777b7f 11px);
}

.big input::-webkit-slider-thumb {
    width: 13px;
    height: 16px;
    background: linear-gradient(#d8dadc 6px, #8b8f93 6px 8px, #35393c 8px 9px, #8b8f93 9px 12px, #35393c 12px 13px, #777b7f 13px);
}

.cursor {
    position: absolute;
    left: 39px;
    top: 29px;
    width: 13px;
    height: 14px;
}

.modulation {
    width: 141px;
    height: 134px;
    padding: 2px 3px;
}

.panel-head {
    display: flex;
    justify-content: space-between;
    align-items: center;
    height: 16px;
    padding: 0 1px;
}

.check {
    display: flex;
    align-items: center;
    gap: 2px;
    line-height: 10px;
    white-space: nowrap;
}

input[type="checkbox"] {
    appearance: none;
    flex: none;
    width: 9px;
    height: 9px;
    margin: 0;
    border: 1px solid #6f7577;
    border-radius: 50%;
    background: radial-gradient(circle, #74797b 2px, #272c2f 3px);
}

input[type="checkbox"]:checked {
    border-color: #8f3f38;
    background: radial-gradient(circle, #ffc9ba 1px, #ee5b4c 3px);
}

.mod-body {
    display: flex;
    margin-top: 5px;
}

.pad {
    width: 108px;
    height: 108px;
    background: #313639;
}

.pad svg {
    width: 108px;
    height: 108px;
}

.xy {
    flex: 1;
    display: flex;
    flex-direction: column;
    align-items: center;
    gap: 5px;
    padding-left: 6px;
    color: #b9bebf;
    font-size: 9px;
    line-height: 8px;
}

.xy svg {
    width: 20px;
    height: 20px;
}

.eq {
    display: flex;
    width: 139px;
    height: 134px;
    padding: 2px 2px 0 5px;
}

.eq-left {
    flex: 1;
    padding-top: 1px;
}

.eq-switch {
    margin-top: 7px;
}

.eq-switch label {
    display: flex;
    align-items: center;
    gap: 5px;
    height: 11px;
    font-size: 8px;
}

.eq-switch input {
    appearance: none;
    width: 10px;
    height: 11px;
    margin: 0;
    background: #1b2022;
}

.eq-switch input:checked {
    background: radial-gradient(circle, #bfc1bd 4px, #1b2022 5px);
}

.eq-names {
    display: flex;
    flex-direction: column;
    align-items: flex-end;
    gap: 14px;
    padding: 20px 8px 0 0;
    line-height: 10px;
}

.eq-names span {
    width: 20px;
}

.eq-band {
    display: flex;
    flex-direction: column;
    align-items: center;
    width: 27px;
}

.eq-band button {
    display: flex;
    align-items: center;
    justify-content: center;
    width: 18px;
    height: 14px;
    background: #33383b;
    color: #b4b9ba;
}

.eq-band button svg {
    width: 16px;
}

.eq-band input {
    margin: 3px 0 8px;
}

.ball {
    width: 18px;
    height: 18px;
    margin-bottom: 7px;
    border-radius: 50%;
    background: linear-gradient(#52575a, #34393c);
}

.ball.arc {
    border-left: 2px solid #dba04e;
}

.left .row:nth-child(2) {
    margin-bottom: 3px;
}

.notes {
    padding: 0 5px;
    color: #b4b9ba;
    font-family: "Liberation Sans", sans-serif;
    font-size: 9px;
    line-height: 9px;
}

.right {
    width: 153px;
    padding-top: 4px;
}

.unison {
    display: flex;
    height: 82px;
    margin-bottom: 5px;
    padding-right: 3px;
}

.order {
    display: flex;
    flex-direction: column;
    align-items: center;
    width: 34px;
    line-height: 12px;
}

.order b {
    width: 20px;
    height: 17px;
    margin: 5px 0 4px;
    background: #33383b;
    color: #fff;
    font-size: 14px;
    line-height: 17px;
    text-align: center;
}

.order .check {
    flex-direction: column;
    gap: 4px;
}

.uni {
    flex: 1;
    text-align: right;
}

.uni h2 {
    padding-right: 2px;
}

.quality {
    display: grid;
    grid-template-columns: 1fr 32px 32px;
    grid-template-rows: 22px 26px 24px;
    align-items: center;
    justify-items: center;
    height: 75px;
    padding: 0 2px 0 4px;
}

.quality > :nth-child(3n + 1) {
    justify-self: start;
}

.quality b {
    width: 21px;
    height: 18px;
    background: #2d3235;
    color: #fff;
    font-size: 14px;
    line-height: 18px;
    text-align: center;
}

.options {
    display: flex;
    justify-content: space-between;
    padding-top: 6px;
    color: #b4b9ba;
    font-size: 8px;
}

.options .check {
    height: 16px;
}

.soften {
    display: flex;
    flex-direction: column;
    align-items: center;
    padding-top: 10px;
    font-size: 9px;
    line-height: 10px;
}

.soften .ball {
    margin-bottom: 4px;
}

.logo {
    display: flex;
    align-items: center;
    justify-content: flex-end;
    padding: 6px 6px 0 0;
}

.logo strong {
    color: #f2f4f4;
    font-family: Lato, sans-serif;
    font-size: 23px;
    font-style: italic;
    font-weight: 900;
    line-height: 28px;
    text-shadow: 0 0 2px #a3a8aa, 1px 2px 1px #15181a;
}

.logo svg {
    width: 28px;
    height: 22px;
    margin: 6px 0 0 -4px;
}

/* Matrix */
.matrix {
    width: 243px;
    margin-left: auto;
}

.matrix table {
    width: 243px;
    height: 243px;
    border-collapse: collapse;
    table-layout: fixed;
}

.matrix th {
    height: 15px;
    padding: 0;
    background: #202528;
    color: #e3e7e8;
    font-size: 13px;
    line-height: 14px;
}

.matrix th:first-child {
    width: 15px;
}

.matrix td {
    padding: 0;
    border: 1px solid #2a2f32;
    background: #3a3f43;
    color: #1f2427;
    line-height: 0;
    text-align: center;
}

.matrix td svg {
    width: 19px;
    height: 19px;
}

.matrix .pan, .matrix .dim {
    background: #2f3437;
    color: #24292c;
}

.matrix .fx {
    background: #3d484b;
}

.matrix .active {
    color: #eda24a;
}

.matrix .active:not(.fx) {
    background: #2f3437;
}

.matrix-foot {
    display: flex;
    height: 15px;
    background: #25292c;
}

.matrix-foot button {
    width: 37px;
    color: #fff;
    font-size: 13px;
    line-height: 14px;
}

.matrix-foot h2 {
    margin-left: auto;
    padding-right: 4px;
}

/* Keyboard */
.keyboard {
    display: flex;
    height: 81px;
    border-top: 2px solid #2a3033;
    background: #c9ccd2;
    overflow: hidden;
}

.key {
    position: relative;
    flex: 0 0 20px;
    padding-top: 12px;
    background: #bfc2c7;
}

.key span {
    position: absolute;
    top: 0;
    left: 1px;
    color: #3c4145;
    font-family: "Liberation Sans", sans-serif;
    font-size: 8px;
    line-height: 12px;
}

.white {
    display: block;
    width: 20px;
    height: 67px;
    border-top: 1px solid #a4a8ae;
    border-left: 1px solid #b2b6be;
    background: linear-gradient(#c6c9d0, #d6d8de);
}

.key.c .white {
    background: #bbbec9;
}

.key.hit .white {
    background: #f7ae52;
}

.black {
    position: absolute;
    top: 12px;
    left: 14px;
    z-index: 1;
    width: 10px;
    height: 45px;
    border: 1px solid #26292b;
    background: linear-gradient(155deg, #42474a 60%, #222527 61%);
}

.black.hit {
    border-color: #e0701f;
    background: linear-gradient(155deg, #f08a3c 60%, #dd5f0c 61%);
}

/* black keys sit left of centre on C and F, right of it on D and A */
.key.c .black, .key.f .black {
    left: 13px;
}

.key.d .black, .key.a .black {
    left: 16px;
}
```
FILE: script.js
```js
const icon = (id) => `<svg><use href="#${id}"/></svg>`;

// Browser list
const sounds = [];
[12, 13, 14, 15, 16, 17, 19, 21, 23, 24, 25, 26, 27].forEach(n => sounds.push(`kick_oh ${n}`));
for (let n = 1; n <= 17; n++) {
    const kind = n < 7 ? 'soft' : n < 13 ? 'medium' : 'hard';
    sounds.push(`ride ${String(n).padStart(2, '0')} ${kind}`);
}
for (let n = 1; n <= 4; n++) sounds.push(`ridebell 0${n} soft`);
document.getElementById('sounds').innerHTML = sounds
    .map(s => `<li class="${s === 'ride 17 hard' ? 'on' : ''}">${icon('sample')}${s}</li>`)
    .join('');

// Playlist tracks and ruler
let tracks = '', lanes = '', ruler = '';
for (let n = 1; n <= 13; n++) {
    tracks += `<div class="track">Track ${n}<i class="led"></i></div>`;
    lanes += '<div class="lane"></div>';
}
for (let n = 1; n <= 22; n++) ruler += `<span>${n}</span>`;
document.getElementById('tracks').innerHTML = tracks;
document.getElementById('lanes').innerHTML = lanes;
document.getElementById('ruler').innerHTML = ruler;

// Step buttons, every second group of four is red
let steps = '';
for (let n = 0; n < 16; n++) steps += `<i class="${n % 8 > 3 ? 'red' : ''}"></i>`;
document.getElementById('steps-row').innerHTML = steps;

// Modulation matrix
const active = { F1: [0, 1, 7, 8] };
document.getElementById('matrix').innerHTML = ['1', '2', '3', '4', '5', '6', 'F1', 'F2', 'F3'].map(row => {
    let cells = '';
    for (let col = 0; col < 9; col++) {
        const on = (active[row] || []).includes(col);
        const cls = [];
        if (col === 6) cls.push('pan');
        if (col === 7) cls.push('fx');
        if (row[0] === 'F' && col < 6) cls.push('dim');
        if (on) cls.push('active');
        cells += `<td class="${cls.join(' ')}">${icon(on ? 'ring-on' : 'ring')}</td>`;
    }
    return `<tr><th>${row}</th>${cells}</tr>`;
}).join('');

// Keyboard, starting on A2
const notes = ['c', 'd', 'e', 'f', 'g', 'a', 'b'];
const hits = ['e4', 'a4'];
let keys = '';
for (let i = 5; i < 41; i++) {
    const note = notes[i % 7];
    const octave = 2 + Math.floor(i / 7);
    const hit = hits.includes(note + octave) ? 'hit' : '';
    const sharp = note !== 'e' && note !== 'b'
        ? `<button class="black ${note + octave === 'f4' ? 'hit' : ''}" aria-label="${note}# ${octave}"></button>` : '';
    const name = note === 'c' ? `<span>C${octave}</span>` : '';
    keys += `<div class="key ${note} ${hit}">${name}<button class="white" aria-label="${note} ${octave}"></button>${sharp}</div>`;
}
document.getElementById('keyboard').innerHTML = keys;
```
